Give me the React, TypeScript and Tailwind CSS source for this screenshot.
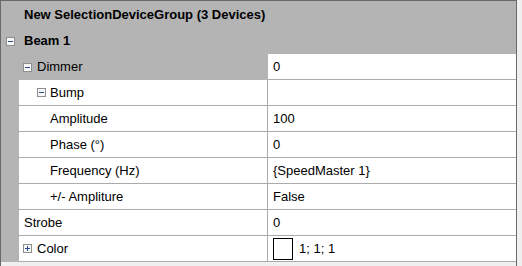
import type { ReactNode } from 'react'

const font = { fontFamily: '"Liberation Sans", Arial, sans-serif' }

function Expander({ open }: { open: boolean }) {
  return (
    <svg width="9" height="9" viewBox="0 0 9 9" className="shrink-0">
      <rect x="0.5" y="0.5" width="8" height="8" fill="#f7f7f7" stroke="#8e8f8f" />
      <line x1="2" y1="4.5" x2="7" y2="4.5" stroke="#2b4a8c" />
      {!open && <line x1="4.5" y1="2" x2="4.5" y2="7" stroke="#2b4a8c" />}
    </svg>
  )
}

type RowProps = {
  label: string
  value?: ReactNode
  pad: string
  expander?: 'open' | 'closed'
  gap?: string
  grayName?: boolean
}

function Row({ label, value, pad, expander, gap = 'gap-[5px]', grayName }: RowProps) {
  return (
    <div className="flex h-[26px]">
      <div className="flex w-[18px] shrink-0 bg-[#b4b4b4]" />
      <div className="flex flex-1 border-b border-[#ababab]">
        <div
          className={`flex w-[249px] shrink-0 items-center border-r border-[#ababab] ${pad} ${gap} ${
            grayName ? 'bg-[#b4b4b4]' : 'bg-white'
          }`}
        >
          {expander && <Expander open={expander === 'open'} />}
          <span>{label}</span>
        </div>
        <div className="flex flex-1 items-center bg-white pl-[5px]">{value}</div>
      </div>
    </div>
  )
}

export default function App() {
  return (
    <div className="h-[266px] w-[522px] bg-[#f0f0f0] text-[13px] text-black" style={font}>
      <div className="flex h-full w-[517px] flex-col border-x border-t border-[#696969]">
        <div className="flex h-[27px] items-center bg-[#b4b4b4] pl-[23px] font-bold">
          New SelectionDeviceGroup (3 Devices)
        </div>
        <div className="flex h-[26px] items-center gap-[9px] bg-[#b4b4b4] pl-[5px] font-bold">
          <Expander open />
          <span>Beam 1</span>
        </div>
        <div className="flex h-[26px]">
          <div className="flex w-[267px] shrink-0 items-center gap-[5px] border-r border-[#b4b4b4] bg-[#b4b4b4] pl-[22px]">
            <Expander open />
            <span>Dimmer</span>
          </div>
          <div className="flex flex-1 items-center border-b border-[#ababab] bg-white pl-[5px]">0</div>
        </div>
        <Row label="Bump" pad="pl-[18px]" expander="open" gap="gap-[4px]" />
        <Row label="Amplitude" value="100" pad="pl-[31px]" />
        <Row label="Phase (°)" value="0" pad="pl-[31px]" />
        <Row label="Frequency (Hz)" value="{SpeedMaster 1}" pad="pl-[31px]" />
        <Row label="+/- Ampliture" value="False" pad="pl-[31px]" />
        <Row label="Strobe" value="0" pad="pl-[5px]" />
        <Row
          label="Color"
          pad="pl-[4px]"
          expander="closed"
          value={
            <div className="flex items-center gap-[6px]">
              <div className="h-[22px] w-[20px] border border-black bg-white" />
              <span>1; 1; 1</span>
            </div>
          }
        />
      </div>
    </div>
  )
}
